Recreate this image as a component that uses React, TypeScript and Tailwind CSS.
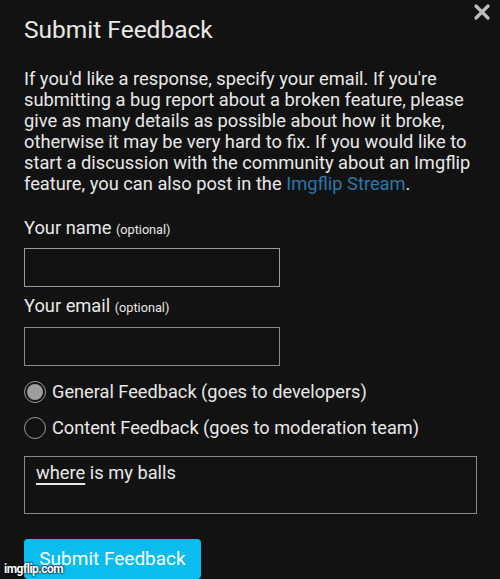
import { X } from "lucide-react";

const App = () => {
  return (
    <div className="relative h-[579px] w-[500px] overflow-hidden bg-[#121212] font-['Roboto',sans-serif] text-[#e8e8e8]">
      <button type="button" className="absolute right-[6px] top-[0px] text-[#bdbdbd]">
        <X size={24} strokeWidth={3.2} />
      </button>

      <div className="px-6 pt-[15px]">
        <h1 className="text-[24.5px] leading-[30px]">Submit Feedback</h1>

        <p className="mt-[23px] text-[18.3px] leading-[21px]">
          If you'd like a response, specify your email. If you're
          <br />
          submitting a bug report about a broken feature, please
          <br />
          give as many details as possible about how it broke,
          <br />
          otherwise it may be very hard to fix. If you would like to
          <br />
          start a discussion with the community about an Imgflip
          <br />
          feature, you can also post in the <span className="text-[#2a78a8]">Imgflip Stream</span>.
        </p>

        <div className="mt-[22px] h-[24px] text-[18.3px] leading-[24px]">
          Your name <span className="text-[12.7px]">(optional)</span>
        </div>
        <div className="mt-[8px] h-[39px] w-[256px] border border-[#9a9a9a]" />

        <div className="mt-[7px] h-[24px] text-[18.3px] leading-[24px]">
          Your email <span className="text-[12.7px]">(optional)</span>
        </div>
        <div className="mt-[9px] h-[39px] w-[256px] border border-[#8a8a8a]" />

        <div className="mt-[15px] flex flex-col gap-[14px] text-[18.2px]">
          <label className="flex items-center gap-[6px]">
            <span className="flex h-[22px] w-[22px] items-center justify-center rounded-full border border-[#9a9a9a]">
              <span className="h-[16px] w-[16px] rounded-full bg-[#9e9e9e]" />
            </span>
            <span className="leading-[22px]">General Feedback (goes to developers)</span>
          </label>
          <label className="flex items-center gap-[6px]">
            <span className="h-[22px] w-[22px] rounded-full border border-[#9a9a9a]" />
            <span className="leading-[22px]">Content Feedback (goes to moderation team)</span>
          </label>
        </div>

        <div className="mt-[17px] h-[58px] w-[453px] border border-[#8a8a8a] px-[11px] pt-[4px] text-[18.3px] leading-[24px]">
          <span className="underline decoration-[2px] underline-offset-[4px]">where</span> is my balls
        </div>

        <button
          type="button"
          className="mt-[25px] h-[40px] w-[177px] rounded-[4px] bg-[#0bbcee] text-[19px] leading-[40px] text-white"
        >
          Submit Feedback
        </button>
      </div>

      <span className="absolute bottom-[4px] left-[4px] text-[12px] font-bold leading-none tracking-[-0.5px] text-white [text-shadow:0_0_2px_#000,0_0_2px_#000]">
        imgflip.com
      </span>
    </div>
  );
};

export default App;
